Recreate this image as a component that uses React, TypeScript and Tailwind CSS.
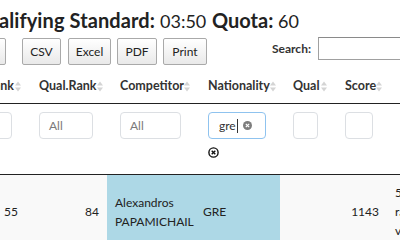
import React from "react";

function SortIcon() {
  return (
    <svg width="6" height="11" viewBox="0 0 6 11" className="shrink-0">
      <path d="M0 4.5 L3 0.5 L6 4.5 Z" fill="#d4d4d4" />
      <path d="M0 6.5 L3 10.5 L6 6.5 Z" fill="#d4d4d4" />
    </svg>
  );
}

function Th({ label }: { label: string }) {
  return (
    <div className="flex items-center justify-between pl-[13px] pr-[5px] h-[33px] text-[12.5px] font-bold whitespace-nowrap overflow-hidden">
      <span>{label}</span>
      <SortIcon />
    </div>
  );
}

function FilterInput({ placeholder }: { placeholder?: string }) {
  return (
    <div className="h-[27px] w-full rounded-[4px] border border-[#dcdfe3] bg-white flex items-center pl-[9px] text-[12px] text-[#7a7a7a]">
      {placeholder}
    </div>
  );
}

function Button({ label, w }: { label: string; w: string }) {
  return (
    <div
      className={`${w} h-[27px] shrink-0 flex items-center justify-center rounded-[2px] border border-[#a9a9a9] bg-gradient-to-b from-white to-[#e9e9e9] text-[12px] text-[#222]`}
    >
      {label}
    </div>
  );
}

export default function App() {
  return (
    <div className="w-[400px] h-[240px] overflow-hidden bg-white text-[#333] [font-family:Lato,sans-serif]">
      {/* Title */}
      <div className="flex h-[34px] items-baseline pt-[5px] whitespace-nowrap -ml-[45px] text-[#222]">
        <b className="w-[200px] shrink-0 text-right text-[20px] tracking-[0.1px]">Qualifying Standard:</b>
        <span className="ml-[5px] w-[47px] shrink-0 text-[18px]">03:50</span>
        <b className="ml-[5px] w-[60px] shrink-0 text-[20px]">Quota:</b>
        <span className="ml-[6px] text-[18px]">60</span>
      </div>

      {/* Buttons + search */}
      <div className="flex items-start h-[27px] mt-[4px] whitespace-nowrap">
        <div className="flex -ml-[36px]">
          <Button label="Copy" w="w-[42px]" />
          <div className="w-[16px] shrink-0" />
          <Button label="CSV" w="w-[39px]" />
          <div className="w-[7px] shrink-0" />
          <Button label="Excel" w="w-[43px]" />
          <div className="w-[6px] shrink-0" />
          <Button label="PDF" w="w-[40px]" />
          <div className="w-[6px] shrink-0" />
          <Button label="Print" w="w-[44px]" />
        </div>
        <div className="ml-[65px] flex items-center h-[23px] -mt-[1px]">
          <span className="text-[12px] font-bold text-[#333]">Search:</span>
          <div className="ml-[7px] w-[100px] h-[23px] border border-[#a0a0a0] border-t-[#8a8a8a] bg-white shrink-0" />
        </div>
      </div>

      {/* Table */}
      <div className="mt-[5px] -ml-[27px] w-[520px]">
        {/* header */}
        <div className="grid grid-cols-[53px_81px_88px_85px_52px_55px_106px] border-b border-[#222]">
          <Th label="Rank" />
          <Th label="Qual.Rank" />
          <Th label="Competitor" />
          <Th label="Nationality" />
          <Th label="Qual" />
          <Th label="Score" />
          <Th label="Notes" />
        </div>
        {/* filter row */}
        <div className="grid grid-cols-[53px_81px_88px_85px_52px_55px_106px] h-[71px] border-b border-[#222]">
          <div className="pl-[13px] pr-[14px] pt-[8px]"><FilterInput /></div>
          <div className="pl-[13px] pr-[14px] pt-[8px]"><FilterInput placeholder="All" /></div>
          <div className="pl-[13px] pr-[14px] pt-[8px]"><FilterInput placeholder="All" /></div>
          <div className="pl-[13px] pr-[14px] pt-[8px]">
            <div className="h-[27px] w-full rounded-[4px] border border-[#8fc3ef] bg-white flex items-center pl-[10px] text-[12px] text-[#333] relative">
              <span>gre</span>
              <span className="w-[1px] h-[14px] bg-[#333] ml-[1px]" />
              <svg width="9" height="9" viewBox="0 0 9 9" className="absolute right-[13px] top-[8px]">
                <circle cx="4.5" cy="4.5" r="4.5" fill="#7d7d7d" />
                <path d="M2.8 2.8 L6.2 6.2 M6.2 2.8 L2.8 6.2" stroke="#fff" strokeWidth="1.2" />
              </svg>
            </div>
            <svg width="11" height="11" viewBox="0 0 11 11" className="mt-[8px]">
              <circle cx="5.5" cy="5.5" r="4.6" fill="none" stroke="#111" strokeWidth="1.4" />
              <path d="M3.7 3.7 L7.3 7.3 M7.3 3.7 L3.7 7.3" stroke="#111" strokeWidth="1.4" />
            </svg>
          </div>
          <div className="pl-[13px] pr-[14px] pt-[8px]"><FilterInput /></div>
          <div className="pl-[13px] pr-[14px] pt-[8px]"><FilterInput /></div>
          <div className="pl-[13px] pr-[14px] pt-[8px]"><FilterInput /></div>
        </div>
        {/* body row */}
        <div className="grid grid-cols-[53px_81px_88px_85px_52px_55px_106px] text-[12px] leading-[19px] text-[#222]">
          <div className="bg-[#f9f9f9] px-[8px] py-[8px] flex items-center justify-end">55</div>
          <div className="bg-[#f9f9f9] px-[8px] py-[8px] flex items-center justify-end">84</div>
          <div className="bg-[#add8e6] px-[8px] py-[8px] flex items-center">
            <span>Alexandros<br />PAPAMICHAIL</span>
          </div>
          <div className="bg-[#add8e6] px-[8px] py-[8px] flex items-center">GRE</div>
          <div className="bg-[#f9f9f9] px-[8px] py-[8px]" />
          <div className="bg-[#f9f9f9] px-[8px] py-[8px] flex items-center justify-end">1143</div>
          <div className="bg-[#f9f9f9] px-[8px] py-[8px] flex items-center">
            <span>5th<br />ranked<br />via</span>
          </div>
        </div>
      </div>
    </div>
  );
}
